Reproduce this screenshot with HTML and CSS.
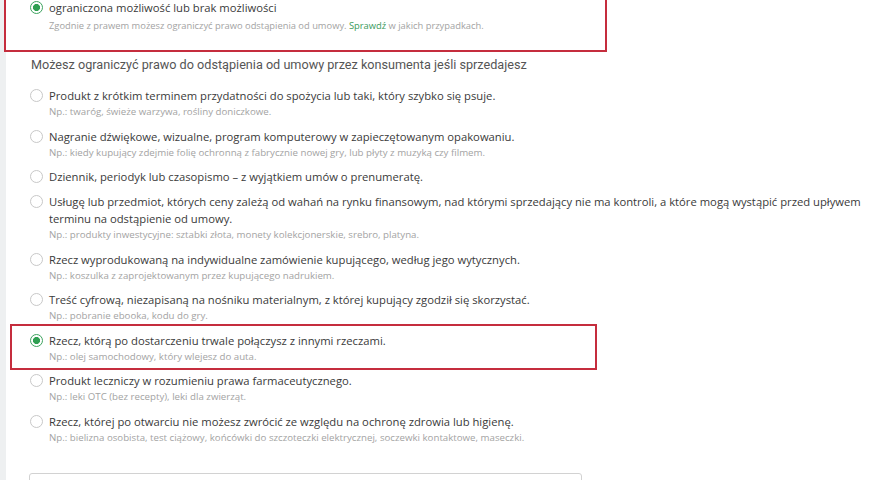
FILE: index.html
```html
<!DOCTYPE html>
<html lang="pl">

<head>
    <meta charset="UTF-8">
    <meta name="viewport" content="width=device-width, initial-scale=1.0">
    <title>Prawo odstąpienia od umowy</title>
    <link rel="stylesheet" href="styles.css">
</head>

<body>

    <div class="page">

        <div class="choice choice-top marked-top">
            <span class="radio checked"></span>
            <div class="choice-text">
                <div class="label">ograniczona możliwość lub brak możliwości</div>
                <div class="hint hint-top">Zgodnie z prawem możesz ograniczyć prawo odstąpienia od umowy. <a href="#">Sprawdź</a> w jakich przypadkach.</div>
            </div>
        </div>

        <h2 class="heading">Możesz ograniczyć prawo do odstąpienia od umowy przez konsumenta jeśli sprzedajesz</h2>

        <div class="list">
            <div class="choice">
                <span class="radio"></span>
                <div class="choice-text">
                    <div class="label">Produkt z krótkim terminem przydatności do spożycia lub taki, który szybko się psuje.</div>
                    <div class="hint">Np.: twaróg, świeże warzywa, rośliny doniczkowe.</div>
                </div>
            </div>
            <div class="choice">
                <span class="radio"></span>
                <div class="choice-text">
                    <div class="label">Nagranie dźwiękowe, wizualne, program komputerowy w zapieczętowanym opakowaniu.</div>
                    <div class="hint">Np.: kiedy kupujący zdejmie folię ochronną z fabrycznie nowej gry, lub płyty z muzyką czy filmem.</div>
                </div>
            </div>
            <div class="choice">
                <span class="radio"></span>
                <div class="choice-text">
                    <div class="label">Dziennik, periodyk lub czasopismo – z wyjątkiem umów o prenumeratę.</div>
                </div>
            </div>
            <div class="choice">
                <span class="radio"></span>
                <div class="choice-text">
                    <div class="label">Usługę lub przedmiot, których ceny zależą od wahań na rynku finansowym, nad którymi sprzedający nie ma kontroli, a które mogą wystąpić przed upływem terminu na odstąpienie od umowy.</div>
                    <div class="hint">Np.: produkty inwestycyjne: sztabki złota, monety kolekcjonerskie, srebro, platyna.</div>
                </div>
            </div>
            <div class="choice">
                <span class="radio"></span>
                <div class="choice-text">
                    <div class="label">Rzecz wyprodukowaną na indywidualne zamówienie kupującego, według jego wytycznych.</div>
                    <div class="hint">Np.: koszulka z zaprojektowanym przez kupującego nadrukiem.</div>
                </div>
            </div>
            <div class="choice">
                <span class="radio"></span>
                <div class="choice-text">
                    <div class="label">Treść cyfrową, niezapisaną na nośniku materialnym, z której kupujący zgodził się skorzystać.</div>
                    <div class="hint">Np.: pobranie ebooka, kodu do gry.</div>
                </div>
            </div>
            <div class="choice marked">
                <span class="radio checked"></span>
                <div class="choice-text">
                    <div class="label">Rzecz, którą po dostarczeniu trwale połączysz z innymi rzeczami.</div>
                    <div class="hint">Np.: olej samochodowy, który wlejesz do auta.</div>
                </div>
            </div>
            <div class="choice">
                <span class="radio"></span>
                <div class="choice-text">
                    <div class="label">Produkt leczniczy w rozumieniu prawa farmaceutycznego.</div>
                    <div class="hint">Np.: leki OTC (bez recepty), leki dla zwierząt.</div>
                </div>
            </div>
            <div class="choice">
                <span class="radio"></span>
                <div class="choice-text">
                    <div class="label">Rzecz, której po otwarciu nie możesz zwrócić ze względu na ochronę zdrowia lub higienę.</div>
                    <div class="hint">Np.: bielizna osobista, test ciążowy, końcówki do szczoteczki elektrycznej, soczewki kontaktowe, maseczki.</div>
                </div>
            </div>
        </div>

        <div class="textbox"></div>

    </div>

</body>

</html>
```

FILE: styles.css
```css
html,
body {
    margin: 0;
    padding: 0;
    height: 100%;
    overflow: hidden;
}

body {
    font-family: "Open Sans", Arial, sans-serif;
    background: linear-gradient(to right, #eef0f1 6px, #fff 6px);
    color: #3a3a3a;
}

.page {
    width: 880px;
}

/* one radio row */
.choice {
    display: flex;
    align-items: flex-start;
    padding: 4px 10px 4px 30px;
}

.radio {
    flex: none;
    box-sizing: border-box;
    width: 13px;
    height: 13px;
    margin-top: 2px;
    margin-right: 6px;
    border: 1px solid #c8c8c8;
    border-radius: 50%;
    background-color: #fff;
}

.radio.checked {
    border: 1.5px solid #3ea35f;
    background: radial-gradient(circle, #2f9f52 0, #2f9f52 3.3px, #fff 3.8px);
}

.label {
    font-size: 11.25px;
    line-height: 17px;
    color: #3a3a3a;
}

.hint {
    font-size: 9.7px;
    line-height: 15.5px;
    color: #a3a3a3;
}

.hint a {
    color: #3a9a5c;
    text-decoration: none;
}

/* red annotation frames */
.marked-top {
    margin: -10px 0 0 4px;
    width: 603px;
    box-sizing: border-box;
    padding: 6.5px 0 16.5px 24px;
    border: 2px solid #c52d3d;
}

.hint-top {
    margin-top: 2px;
    font-size: 9.35px;
}

.marked {
    margin: -3.5px 0 -1.5px 10px;
    width: 587px;
    box-sizing: border-box;
    padding: 5.5px 0 3.5px 18px;
    border: 2px solid #c52d3d;
}

.heading {
    margin: 4px 0 9.5px 31px;
    font-family: Roboto, Arial, sans-serif;
    font-weight: normal;
    font-size: 12.65px;
    line-height: 18px;
    color: #555;
}

.textbox {
    margin: 24px 0 0 29px;
    width: 553px;
    height: 60px;
    box-sizing: border-box;
    border: 1px solid #d2d2d2;
    border-radius: 3px;
}
```
